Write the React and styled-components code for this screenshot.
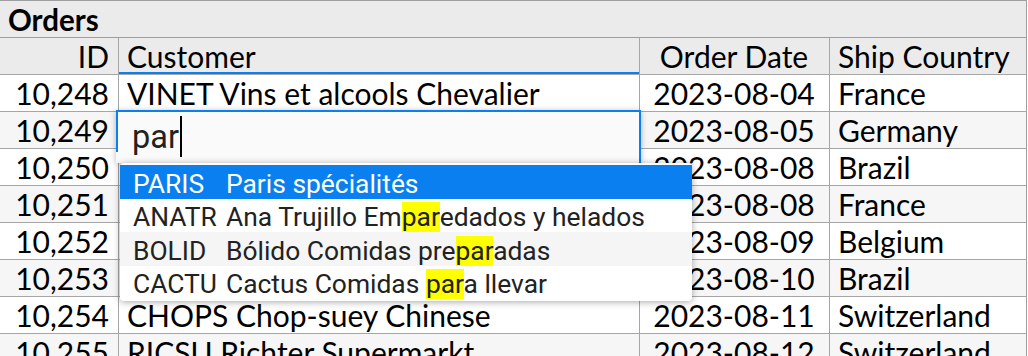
import React from 'react'
import styled, { createGlobalStyle } from 'styled-components'

const GlobalStyle = createGlobalStyle`
  html, body { margin: 0; padding: 0; background: #fff; }
  body { font-family: Lato, "Liberation Sans", sans-serif; overflow: hidden; }
`

const Grid = styled.div`
  width: 1027px;
  border-top: 1px solid #9e9e9e;
  border-right: 1px solid #9e9e9e;
  box-sizing: border-box;
  color: #000;
`

const TitleBar = styled.div`
  height: 37px;
  background: #ebebeb;
  border-bottom: 1px solid #9e9e9e;
  box-sizing: border-box;
  display: flex;
  align-items: center;
  padding-left: 8px;
  font-weight: 700;
  font-size: 29.5px;
`

const Row = styled.div`
  display: grid;
  grid-template-columns: 119px 521px 190px 196px;
  height: 37px;
  background: ${(props) => props.header ? '#ebebeb' : props.striped ? '#f6f6f6' : '#fff'};
`

const Cell = styled.div`
  position: relative;
  box-sizing: border-box;
  border-bottom: 1px solid #a6a6a6;
  border-right: ${(props) => props.last ? 'none' : '1px solid #a6a6a6'};
  display: flex;
  align-items: center;
  justify-content: ${(props) => props.align === 'right' ? 'flex-end' : props.align === 'center' ? 'center' : 'flex-start'};
  padding: 0 9px 0 8px;
  font-size: 30px;
  white-space: nowrap;
  box-shadow: ${(props) => props.focus ? 'inset 0 -2px 0 #0a7fef' : 'none'};
`

const Editor = styled.div`
  position: absolute;
  top: -2px;
  left: -3px;
  width: 525px;
  height: 53px;
  box-sizing: border-box;
  background: #fafafa;
  border-top: 2px solid #0a7fef;
  border-right: 2px solid #0a7fef;
  box-shadow: 0 1px 6px rgba(0, 0, 0, 0.28);
  display: flex;
  align-items: flex-start;
  padding: 6px 0 0 16px;
  font-family: Roboto, "Liberation Sans", Arial, sans-serif;
  font-size: 32.5px;
  line-height: 38px;
  color: #222;
  z-index: 2;

  &::before {
    content: '';
    position: absolute;
    left: 0;
    top: 0;
    width: 2px;
    height: 40px;
    background: #0a7fef;
  }
`

const Caret = styled.span`
  display: block;
  width: 2px;
  height: 41px;
  margin: -2px 0 0 1px;
  background: #000;
`

const Dropdown = styled.div`
  position: absolute;
  top: 51px;
  left: 4px;
  width: 572px;
  box-sizing: border-box;
  padding: 2px 0;
  background: #fff;
  border-radius: 4px;
  box-shadow: 0 1px 7px rgba(0, 0, 0, 0.35);
  font-family: Roboto, "Liberation Sans", Arial, sans-serif;
  font-size: 26.4px;
  line-height: normal;
  z-index: 3;
`

const Option = styled.div`
  display: flex;
  align-items: flex-end;
  height: 33.5px;
  padding-left: 13px;
  white-space: pre;
  background: ${(props) => props.selected ? '#0a7fef' : props.striped ? '#f5f5f5' : '#fff'};
  color: ${(props) => props.selected ? '#fff' : '#222'};
`

const Code = styled.span`
  min-width: 93px;
`

const Mark = styled.span`
  background: #ffff00;
`

const rows = [
  ['10,248', 'VINET Vins et alcools Chevalier', '2023-08-04', 'France'],
  ['10,249', 'TOMSP Toms Spezialitäten', '2023-08-05', 'Germany'],
  ['10,250', 'HANAR Hanari Carnes', '2023-08-08', 'Brazil'],
  ['10,251', 'VICTE Victuailles en stock', '2023-08-08', 'France'],
  ['10,252', 'SUPRD Suprêmes délices', '2023-08-09', 'Belgium'],
  ['10,253', 'HANAR Hanari Carnes', '2023-08-10', 'Brazil'],
  ['10,254', 'CHOPS Chop-suey Chinese', '2023-08-11', 'Switzerland'],
  ['10,255', 'RICSU Richter Supermarkt', '2023-08-12', 'Switzerland'],
]

const options = [
  { code: 'PARIS', name: 'Paris spécialités' },
  { code: 'ANATR', name: 'Ana Trujillo Emparedados y helados' },
  { code: 'BOLID', name: 'Bólido Comidas preparadas' },
  { code: 'CACTU', name: 'Cactus Comidas para llevar' },
]

function Highlight({ text, query, plain }) {
  const i = text.toLowerCase().indexOf(query)
  if (plain || i < 0) return <span>{text}</span>
  return (
    <span>
      {text.slice(0, i)}
      <Mark>{text.slice(i, i + query.length)}</Mark>
      {text.slice(i + query.length)}
    </span>
  )
}

function CustomerEditor() {
  const query = 'par'
  return (
    <Editor>
      <span>{query}</span>
      <Caret />
      <Dropdown>
        {options.map((o, i) => (
          <Option key={o.code} selected={i === 0} striped={i === 2}>
            <Code>{o.code}</Code>
            <Highlight text={o.name} query={query} plain={i === 0} />
          </Option>
        ))}
      </Dropdown>
    </Editor>
  )
}

export default function App() {
  return (
    <>
      <GlobalStyle />
      <Grid>
        <TitleBar>Orders</TitleBar>
        <Row header>
          <Cell align="right">ID</Cell>
          <Cell focus>Customer</Cell>
          <Cell align="center">Order Date</Cell>
          <Cell last>Ship Country</Cell>
        </Row>
        {rows.map((r, i) => (
          <Row key={r[0]} striped={i % 2 === 1}>
            <Cell align="right">{r[0]}</Cell>
            <Cell>{i === 1 ? <CustomerEditor /> : r[1]}</Cell>
            <Cell align="center">{r[2]}</Cell>
            <Cell last>{r[3]}</Cell>
          </Row>
        ))}
      </Grid>
    </>
  )
}
